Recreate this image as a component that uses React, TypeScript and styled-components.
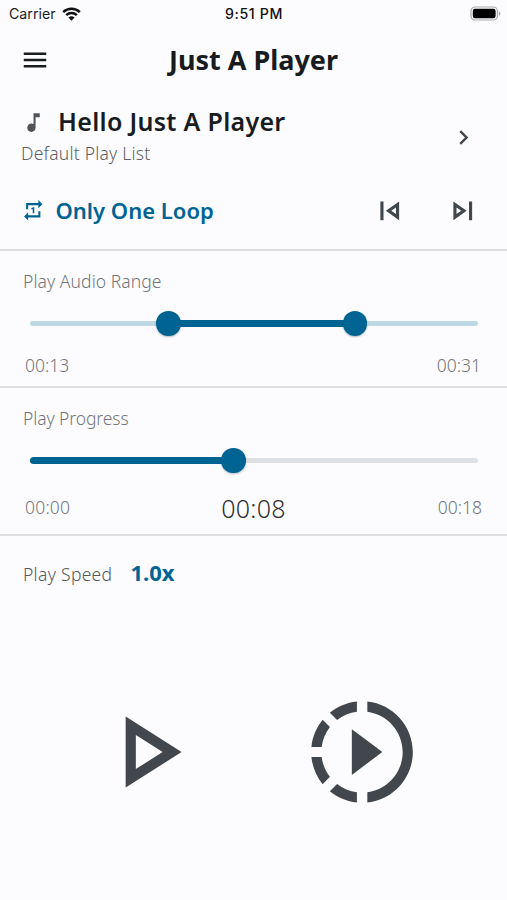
import React from "react";
import styled, { createGlobalStyle } from "styled-components";

const blue = "#006493";
const ink = "#41474d";

const Global = createGlobalStyle`
  *, *::before, *::after { box-sizing: border-box; }
  body { margin: 0; background: #fcfcff; }
  button { border: 0; padding: 0; background: none; color: inherit; font: inherit; }
`;

const Screen = styled.main`
  width: 507px;
  height: 900px;
  overflow: hidden;
  display: flex;
  flex-direction: column;
  background: #fcfcff;
  color: #191c1e;
  font-family: "Noto Sans", "Open Sans", sans-serif;
`;

const StatusBar = styled.div`
  display: grid;
  grid-template-columns: 1fr auto 1fr;
  align-items: center;
  height: 27px;
  padding: 0 6px 0 9px;
  font: 400 14.2px/27px Inter, sans-serif;
  color: #1b1b1d;
`;

const Carrier = styled.div`
  display: flex;
  align-items: center;
  gap: 6px;
`;

const Clock = styled.div`
  margin-right: 2px;
  font-weight: 500;
  font-size: 14.2px;
  letter-spacing: 0.6px;
  color: #111;
`;

const Battery = styled.svg`
  justify-self: end;
  width: 31px;
  height: 15px;
`;

const AppBar = styled.header`
  display: grid;
  grid-template-columns: 31px 1fr 31px;
  align-items: center;
  height: 65px;
  padding: 0 20px;
`;

const Label = styled.span<{ $size: number; $weight?: number; $space?: number; $color?: string }>`
  font-size: ${(p) => p.$size}px;
  font-weight: ${(p) => p.$weight ?? 300};
  letter-spacing: ${(p) => p.$space ?? 0}px;
  color: ${(p) => p.$color ?? "#737579"};
  line-height: 1.2;
  white-space: nowrap;
`;

const Title = styled(Label).attrs({ as: "h1" })`
  margin: 0;
  padding-top: 2px;
  text-align: center;
`;

const TrackTitle = styled(Label)`
  padding-bottom: 3px;
`;

const Rate = styled(Label)`
  padding-bottom: 3px;
`;

const Glyph = styled.svg<{ $size: number }>`
  display: block;
  flex: none;
  width: ${(p) => p.$size}px;
  height: ${(p) => p.$size}px;
  fill: currentColor;
`;

const IconButton = styled.button`
  display: flex;
  color: ${ink};
`;

const MenuButton = styled(IconButton)`
  color: #191c1e;
`;

const Track = styled.section`
  display: flex;
  align-items: center;
  justify-content: space-between;
  height: 85px;
  padding: 6px 29.5px 0 21px;
`;

const TrackInfo = styled.div`
  display: flex;
  flex-direction: column;
  gap: 5px;
  margin-top: -4px;
`;

const TrackName = styled.div`
  display: flex;
  align-items: center;
  gap: 12px;
  height: 30px;
  color: #505459;
`;

const Controls = styled.section`
  display: flex;
  align-items: center;
  justify-content: space-between;
  height: 74px;
  padding: 0 25.5px 5px 21px;
  border-bottom: 2px solid #dcdee2;
`;

const LoopMode = styled.button`
  display: flex;
  align-items: center;
  gap: 10px;
  color: ${blue};
`;

const SkipGroup = styled.div`
  display: flex;
  gap: 36px;
`;

const Panel = styled.section<{ $height: number }>`
  display: flex;
  flex-direction: column;
  height: ${(p) => p.$height}px;
  padding: 20px 25px 0 23px;
  border-bottom: 2px solid #dcdee2;
`;

const Slider = styled.div<{ $rail: string }>`
  position: relative;
  display: flex;
  align-items: center;
  height: 26px;
  margin: 18.5px 4px 0 7px;

  &::before {
    content: "";
    width: 100%;
    height: 5px;
    border-radius: 3px;
    background: ${(p) => p.$rail};
  }
`;

const Fill = styled.div`
  position: absolute;
  height: 7.5px;
  border-radius: 4px;
  background: ${blue};
`;

const Thumb = styled.div`
  position: absolute;
  width: 24.5px;
  height: 24.5px;
  margin-left: -12.25px;
  border-radius: 50%;
  background: ${blue};
  box-shadow: 0 1px 2px rgba(0, 30, 50, 0.3);
`;

const Times = styled.div<{ $top: number; $end?: number }>`
  display: grid;
  grid-template-columns: 1fr auto 1fr;
  align-items: center;
  height: 30px;
  margin: ${(p) => p.$top}px ${(p) => p.$end ?? 0}px 0 2px;

  > :last-child { text-align: right; }
`;

const Speed = styled.section`
  display: flex;
  align-items: center;
  gap: 18px;
  height: 76px;
  padding: 0 23px;
`;

const Transport = styled.section`
  display: flex;
  gap: 94px;
  padding: 79px 0 0 84.5px;
`;

const paths = {
  menu: "M3 18h18v-2H3v2zm0-5h18v-2H3v2zm0-7v2h18V6H3z",
  note: "M12 3v10.55c-.59-.34-1.27-.55-2-.55-2.21 0-4 1.79-4 4s1.79 4 4 4 4-1.79 4-4V7h4V3h-6z",
  chevron: "M10 6L8.59 7.41 13.17 12l-4.58 4.59L10 18l6-6z",
  repeatOne:
    "M7 7h10v3l4-4-4-4v3H5v6h2V7zm10 10H7v-3l-4 4 4 4v-3h12v-6h-2v4zm-4-2V9h-1l-2 1v1h1.5v4H13z",
  previous: "M6 6h2v12H6zm3.5 6l8.5 6V6l-8.5 6zm6.5 2.14L12.97 12 16 9.86v4.28z",
  next: "M6 18l8.5-6L6 6v12zm2-8.14L11.03 12 8 14.14V9.86zM16 6h2v12h-2z",
  play: "M10 8.64L15.27 12 10 15.36V8.64M8 5v14l11-7L8 5z",
  slowMotion:
    "M13.05 9.79L10 7.5v9l3.05-2.29L16 12zM11 4.07V2.05c-2.01.2-3.84 1-5.32 2.21L7.1 5.69c1.11-.86 2.44-1.44 3.9-1.62zM5.69 7.1L4.26 5.68C3.05 7.16 2.25 8.99 2.05 11h2.02c.18-1.46.76-2.79 1.62-3.9zM4.07 13H2.05c.2 2.01 1 3.84 2.21 5.32l1.43-1.43c-.86-1.1-1.44-2.43-1.62-3.89zm1.61 6.74C7.16 20.95 9 21.75 11 21.95v-2.02c-1.46-.18-2.79-.76-3.9-1.62l-1.42 1.43zM22 12c0 5.16-3.92 9.42-8.95 9.95v-2.02C16.97 19.41 20 16.05 20 12s-3.03-7.41-6.95-7.93V2.05C18.08 2.58 22 6.84 22 12z",
};

function Icon({ name, size }: { name: keyof typeof paths; size: number }) {
  return (
    <Glyph $size={size} viewBox="0 0 24 24" aria-hidden="true">
      <path d={paths[name]} />
    </Glyph>
  );
}

function RangeBar({ from, to, rail, range }: { from: number; to: number; rail: string; range?: boolean }) {
  return (
    <Slider $rail={rail}>
      <Fill style={{ left: `${from}%`, width: `${to - from}%` }} />
      {range && <Thumb style={{ left: `${from}%` }} />}
      <Thumb style={{ left: `${to}%` }} />
    </Slider>
  );
}

export default function App() {
  return (
    <>
      <Global />
      <Screen>
        <StatusBar>
          <Carrier>
            Carrier
            <svg width="19" height="14" viewBox="0 0 19 14" fill="none" stroke="#111" strokeWidth="2.5">
              <path d="M1.2 5.1a12 12 0 0 1 16.6 0M4.2 8.2a7.7 7.7 0 0 1 10.6 0" />
              <path d="M9.5 13.7 6.4 10.6a4.5 4.5 0 0 1 6.2 0z" fill="#111" stroke="none" />
            </svg>
          </Carrier>
          <Clock>9:51 PM</Clock>
          <Battery viewBox="0 0 31 15">
            <rect x="1" y="1" width="26.4" height="13" rx="4" fill="#fcfcff" stroke="#a9a9ab" strokeWidth="1.2" />
            <rect x="2.8" y="2.8" width="22.8" height="9.4" rx="2.2" fill="#000" />
            <path d="M28.8 5.2v4.6c2.2-.8 2.2-3.8 0-4.6z" fill="#a9a9ab" />
          </Battery>
        </StatusBar>

        <AppBar>
          <MenuButton aria-label="Menu">
            <Icon name="menu" size={30} />
          </MenuButton>
          <Title $size={27} $weight={700} $color="#191c1e">
            Just A Player
          </Title>
        </AppBar>

        <Track>
          <TrackInfo>
            <TrackName>
              <Icon name="note" size={25} />
              <TrackTitle $size={25} $weight={600} $space={0.3} $color="#191c1e">
                Hello Just A Player
              </TrackTitle>
            </TrackName>
            <Label $size={17.5} $space={0.22} $color="#5d6064">
              Default Play List
            </Label>
          </TrackInfo>
          <IconButton aria-label="Open play list">
            <Icon name="chevron" size={29} />
          </IconButton>
        </Track>

        <Controls>
          <LoopMode>
            <Icon name="repeatOne" size={24.5} />
            <Label $size={22} $weight={600} $color={blue}>
              Only One Loop
            </Label>
          </LoopMode>
          <SkipGroup>
            <IconButton aria-label="Previous">
              <Icon name="previous" size={37.5} />
            </IconButton>
            <IconButton aria-label="Next">
              <Icon name="next" size={37.5} />
            </IconButton>
          </SkipGroup>
        </Controls>

        <Panel $height={137}>
          <Label $size={17.5} $space={0.07}>Play Audio Range</Label>
          <RangeBar from={30.9} to={72.6} rail="#bfd8e6" range />
          <Times $top={14} $end={1}>
            <Label $size={17.5}>00:13</Label>
            <span />
            <Label $size={17.5}>00:31</Label>
          </Times>
        </Panel>

        <Panel $height={148}>
          <Label $size={17.5} $space={-0.1}>Play Progress</Label>
          <RangeBar from={0} to={45.4} rail="#dde1e6" />
          <Times $top={19}>
            <Label $size={17.5} $space={0.2}>00:00</Label>
            <Label $size={25} $space={0.3} $color="#2e3033">
              00:08
            </Label>
            <Label $size={17.5}>00:18</Label>
          </Times>
        </Panel>

        <Speed>
          <Label $size={17.5} $space={0.3} $color="#54575b">
            Play Speed
          </Label>
          <Rate $size={22} $weight={700} $color={blue}>
            1.0x
          </Rate>
        </Speed>

        <Transport>
          <IconButton aria-label="Play">
            <Icon name="play" size={122} />
          </IconButton>
          <IconButton aria-label="Play in slow motion">
            <Icon name="slowMotion" size={122} />
          </IconButton>
        </Transport>
      </Screen>
    </>
  );
}
